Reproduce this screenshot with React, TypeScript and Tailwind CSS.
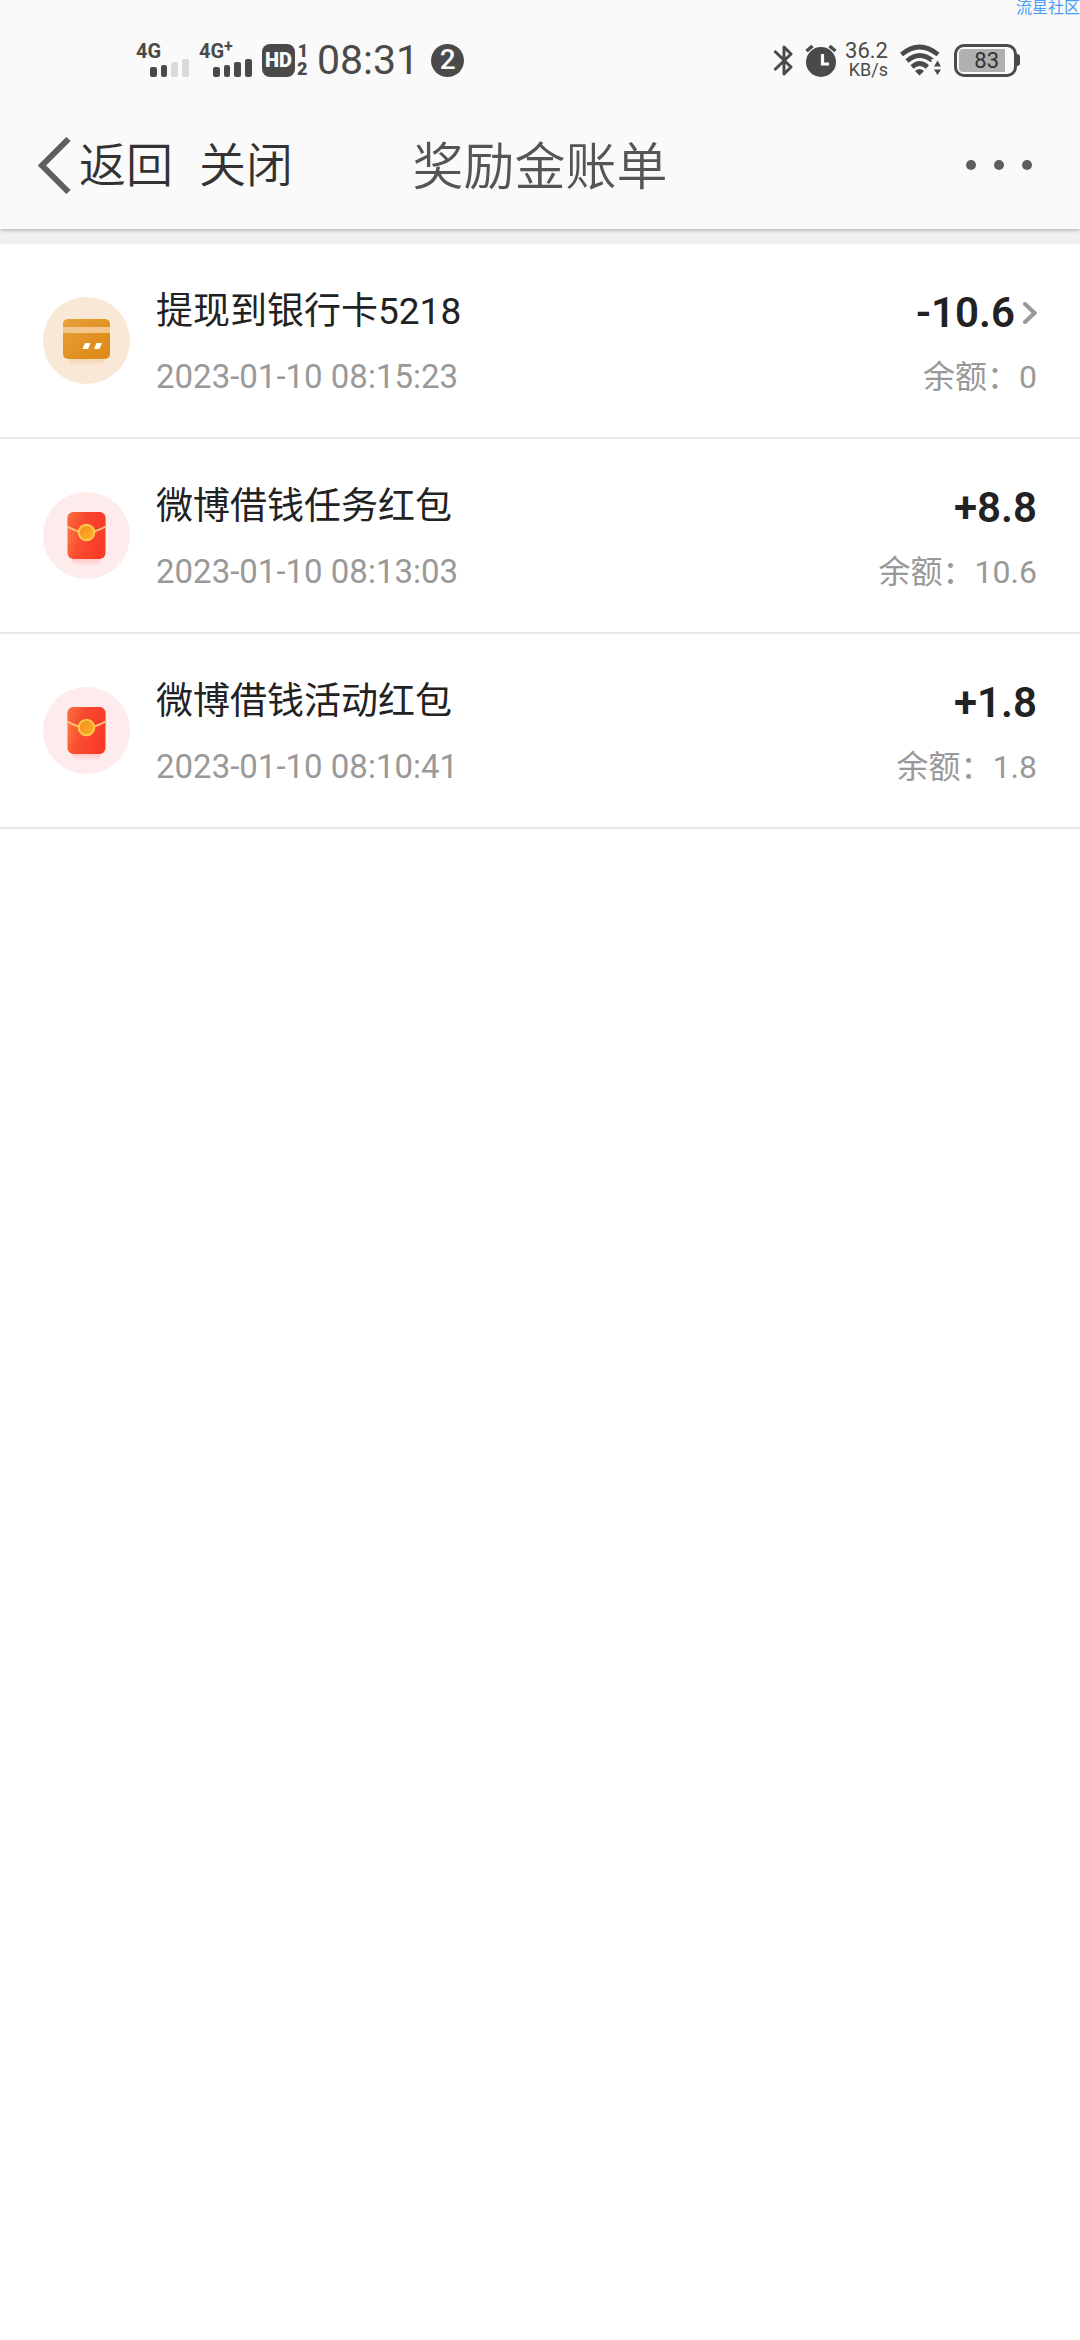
import React from "react";

type Bill = {
  id: number;
  kind: "card" | "packet";
  title: string;
  time: string;
  amount: string;
  balance: string;
  hasDetail?: boolean;
};

const bills: Bill[] = [
  {
    id: 1,
    kind: "card",
    title: "提现到银行卡5218",
    time: "2023-01-10 08:15:23",
    amount: "-10.6",
    balance: "0",
    hasDetail: true,
  },
  {
    id: 2,
    kind: "packet",
    title: "微博借钱任务红包",
    time: "2023-01-10 08:13:03",
    amount: "+8.8",
    balance: "10.6",
  },
  {
    id: 3,
    kind: "packet",
    title: "微博借钱活动红包",
    time: "2023-01-10 08:10:41",
    amount: "+1.8",
    balance: "1.8",
  },
];

const Signal = ({ label, plus, level }: { label: string; plus?: boolean; level: number }) => (
  <div className="flex flex-col w-[53px]">
    <span className="flex text-[20px] leading-4 font-bold">
      {label}
      {plus && <span className="text-[16px] leading-2">+</span>}
    </span>
    <svg viewBox="0 0 39 18" className="self-end w-[39px] h-[18px]" fill="currentColor">
      <rect x="0" y="8" width="7" height="10" rx="2" opacity={level > 0 ? 1 : 0.18} />
      <rect x="11" y="6" width="6" height="12" rx="2" opacity={level > 1 ? 1 : 0.18} />
      <rect x="21" y="3" width="7" height="15" rx="2" opacity={level > 2 ? 1 : 0.18} />
      <rect x="32" y="0" width="7" height="18" rx="2" opacity={level > 3 ? 1 : 0.18} />
    </svg>
  </div>
);

const BluetoothIcon = () => (
  <svg viewBox="0 0 20 33" className="w-5 h-[33px]" fill="none" stroke="currentColor" strokeWidth="3">
    <path d="M1.5 7 L18 23 L11 30 V3 L18 10 L1.5 26" strokeLinejoin="round" />
  </svg>
);

const AlarmIcon = () => (
  <svg viewBox="0 0 32 33" className="w-8 h-[33px]" fill="none">
    <circle cx="16" cy="18" r="15" fill="currentColor" />
    <path d="M1.5 7 L7.5 2 M30.5 7 L24.5 2" stroke="currentColor" strokeWidth="3.5" />
    <path d="M17.5 10 V20 H24" stroke="#fafafa" strokeWidth="3.2" />
  </svg>
);

const WifiIcon = () => (
  <svg viewBox="0 0 42 32" className="w-[42px] h-8" fill="none">
    <g stroke="currentColor" strokeWidth="4.6">
      <path d="M1.5 10.5 Q19.5 -4.5 38 10.5" />
      <path d="M7 17 Q19.5 6 33 17" />
      <path d="M12 23 Q19.5 16 27.5 23" />
    </g>
    <path d="M15 27 Q19.5 23 24 27 L19.5 31.5 Z" fill="currentColor" />
    <path d="M31.5 15 H42 V32 H31.5 Z" fill="#fafafa" />
    <path d="M34 22.5 L37.5 16.5 L41 22.5 Z M34 25.5 L37.5 31 L41 25.5 Z" fill="currentColor" />
  </svg>
);

const StatusBar = () => (
  <div className="flex items-center justify-between h-[120px] pl-[136px] pr-[60px] text-[#4a4a4a]">
    <div className="flex items-center">
      <Signal label="4G" level={2} />
      <div className="mx-[10px]">
        <Signal label="4G" plus level={4} />
      </div>
      <span className="flex items-center justify-center w-[33px] h-[33px] rounded-lg bg-[#4a4a4a] text-[#fafafa] text-[20px] font-black">
        HD
      </span>
      <span className="flex flex-col ml-[2px] w-3 text-[18px] leading-[18px] font-black">
        <span className="text-center">1</span>
        <span>2</span>
      </span>
      <time className="ml-2 text-[41px] leading-[40px]">08:31</time>
      <span className="flex items-center justify-center ml-3 w-[33px] h-[33px] rounded-full bg-[#4a4a4a] text-[#fafafa] text-[28px] font-medium">
        2
      </span>
    </div>

    <div className="flex items-center">
      <BluetoothIcon />
      <div className="ml-3">
        <AlarmIcon />
      </div>
      <div className="flex flex-col items-end ml-2 text-right">
        <span className="text-[22px] leading-5">36.2</span>
        <span className="text-[18px] leading-[18px]">KB/s</span>
      </div>
      <div className="ml-3">
        <WifiIcon />
      </div>
      <div className="flex items-center ml-3">
        <div className="w-[63px] h-[33px] p-[2px] rounded-[10px] border-3 border-[#4a4a4a]">
          <div className="flex items-center justify-end w-[46px] h-full pr-[6px] rounded-l-[4px] bg-[#b0b0b0] text-[#333333] text-[22px]">
            83
          </div>
        </div>
        <div className="w-[3px] h-3 rounded-r-sm bg-[#4a4a4a]" />
      </div>
    </div>
  </div>
);

const NavBar = () => (
  <nav className="grid grid-cols-[1fr_auto_1fr] items-center h-[109px] px-[38px] pb-[18px]">
    <div className="flex items-center text-[47px] leading-[60px] font-[350] text-[#333333]">
      <button type="button" className="flex items-center gap-2">
        <svg viewBox="0 0 33 57" className="w-[33px] h-[57px]" fill="none" stroke="#5e5e5e" strokeWidth="6">
          <path d="M30.5 2 L4 28.5 L30.5 55" />
        </svg>
        返回
      </button>
      <button type="button" className="ml-[26px]">
        关闭
      </button>
    </div>
    <h1 className="pt-1 text-[51px] leading-[60px] font-[350] text-[#555555]">奖励金账单</h1>
    <button type="button" aria-label="更多" className="flex gap-[18px] justify-self-end mr-[10px] pb-[2px]">
      <span className="size-[10px] rounded-full bg-[#5e5e5e]" />
      <span className="size-[10px] rounded-full bg-[#5e5e5e]" />
      <span className="size-[10px] rounded-full bg-[#5e5e5e]" />
    </button>
  </nav>
);

const CardIcon = () => (
  <svg viewBox="0 0 87 87" className="w-[87px] h-[87px] shrink-0">
    <defs>
      <linearGradient id="card" x1="0" y1="0" x2="1" y2="1">
        <stop offset="0" stopColor="#e8a23c" />
        <stop offset="0.6" stopColor="#e09020" />
        <stop offset="1" stopColor="#de8a1a" />
      </linearGradient>
      <linearGradient id="cardShade" x1="0" y1="0" x2="0" y2="1">
        <stop offset="0" stopColor="#f2cba0" />
        <stop offset="1" stopColor="#fae8d7" />
      </linearGradient>
    </defs>
    <circle cx="43.5" cy="43.5" r="43.5" fill="#fae8d7" />
    <rect x="26" y="58" width="35" height="11" rx="5" fill="url(#cardShade)" />
    <rect x="20" y="22" width="47" height="40" rx="5" fill="url(#card)" />
    <rect x="20" y="30" width="47" height="6" fill="#f3c88f" />
    <path d="M42 46 H47.5 L45 52 H39.5 Z M53.5 46 H59 L56.5 52 H51 Z" fill="#ffffff" />
  </svg>
);

const PacketIcon = () => (
  <svg viewBox="0 0 87 87" className="w-[87px] h-[87px] shrink-0">
    <defs>
      <linearGradient id="packet" x1="0" y1="0" x2="1" y2="0.4">
        <stop offset="0" stopColor="#fc8a4c" />
        <stop offset="0.45" stopColor="#fb5030" />
        <stop offset="1" stopColor="#f83c28" />
      </linearGradient>
      <linearGradient id="coin" x1="0" y1="0" x2="1" y2="1">
        <stop offset="0" stopColor="#f58a1c" />
        <stop offset="1" stopColor="#fdb52a" />
      </linearGradient>
      <linearGradient id="packetShade" x1="0" y1="0" x2="0" y2="1">
        <stop offset="0" stopColor="#fcb4b0" />
        <stop offset="1" stopColor="#feebeb" />
      </linearGradient>
    </defs>
    <circle cx="43.5" cy="43.5" r="43.5" fill="#feebeb" />
    <rect x="29" y="62" width="29" height="12" rx="6" fill="url(#packetShade)" />
    <rect x="24.5" y="20" width="38" height="47" rx="6" fill="url(#packet)" />
    <path d="M24.5 35 V26 Q24.5 20 30.5 20 H56.5 Q62.5 20 62.5 26 V35 Q43.5 47 24.5 35 Z" fill="#f43a2a" opacity="0.35" />
    <path d="M24.5 34.5 Q43.5 46 62.5 34.5" fill="none" stroke="#ffc879" strokeWidth="1.8" />
    <circle cx="43.5" cy="40.5" r="7.8" fill="url(#coin)" stroke="#fecb4c" strokeWidth="2" />
  </svg>
);

const BillRow = ({ bill }: { bill: Bill }) => (
  <li className="border-b-2 border-[#e8e8e8]">
    <a href="#" className="flex items-center h-[193px] px-[43px]">
      {bill.kind === "card" ? <CardIcon /> : <PacketIcon />}
      <div className="flex flex-col flex-1 gap-[18px] ml-[26px]">
        <h2 className="text-[37px] leading-[54px] text-[#222222]">{bill.title}</h2>
        <time className="text-[33px] leading-[40px] text-[#999999]">{bill.time}</time>
      </div>
      <div className="flex flex-col items-end gap-[18px]">
        <span className="flex items-center gap-2 text-[42px] leading-[54px] font-semibold text-[#222222]">
          {bill.amount}
          {bill.hasDetail && (
            <svg viewBox="0 0 14 22" className="w-[14px] h-[22px]" fill="none" stroke="#999999" strokeWidth="4">
              <path d="M2 2 L11.5 11 L2 20" strokeLinecap="round" />
            </svg>
          )}
        </span>
        <span className="text-[32px] leading-[38px] text-[#999999]">余额：{bill.balance}</span>
      </div>
    </a>
  </li>
);

export default function App() {
  return (
    <div className="relative min-h-screen bg-white font-[Roboto,'Noto_Sans_CJK_SC',sans-serif]">
      <header className="relative bg-[#fafafa] shadow-[0_1px_4px_rgba(0,0,0,0.3)]">
        <StatusBar />
        <NavBar />
      </header>
      <div className="h-[15px] bg-[#f0f0f0]" />
      <main>
        <ul>
          {bills.map((bill) => (
            <BillRow key={bill.id} bill={bill} />
          ))}
        </ul>
      </main>
      {/* Watermark */}
      <span className="absolute top-0 right-0 text-[16px] leading-4 whitespace-nowrap text-[#4a9cf0]">
        流星社区
      </span>
    </div>
  );
}
